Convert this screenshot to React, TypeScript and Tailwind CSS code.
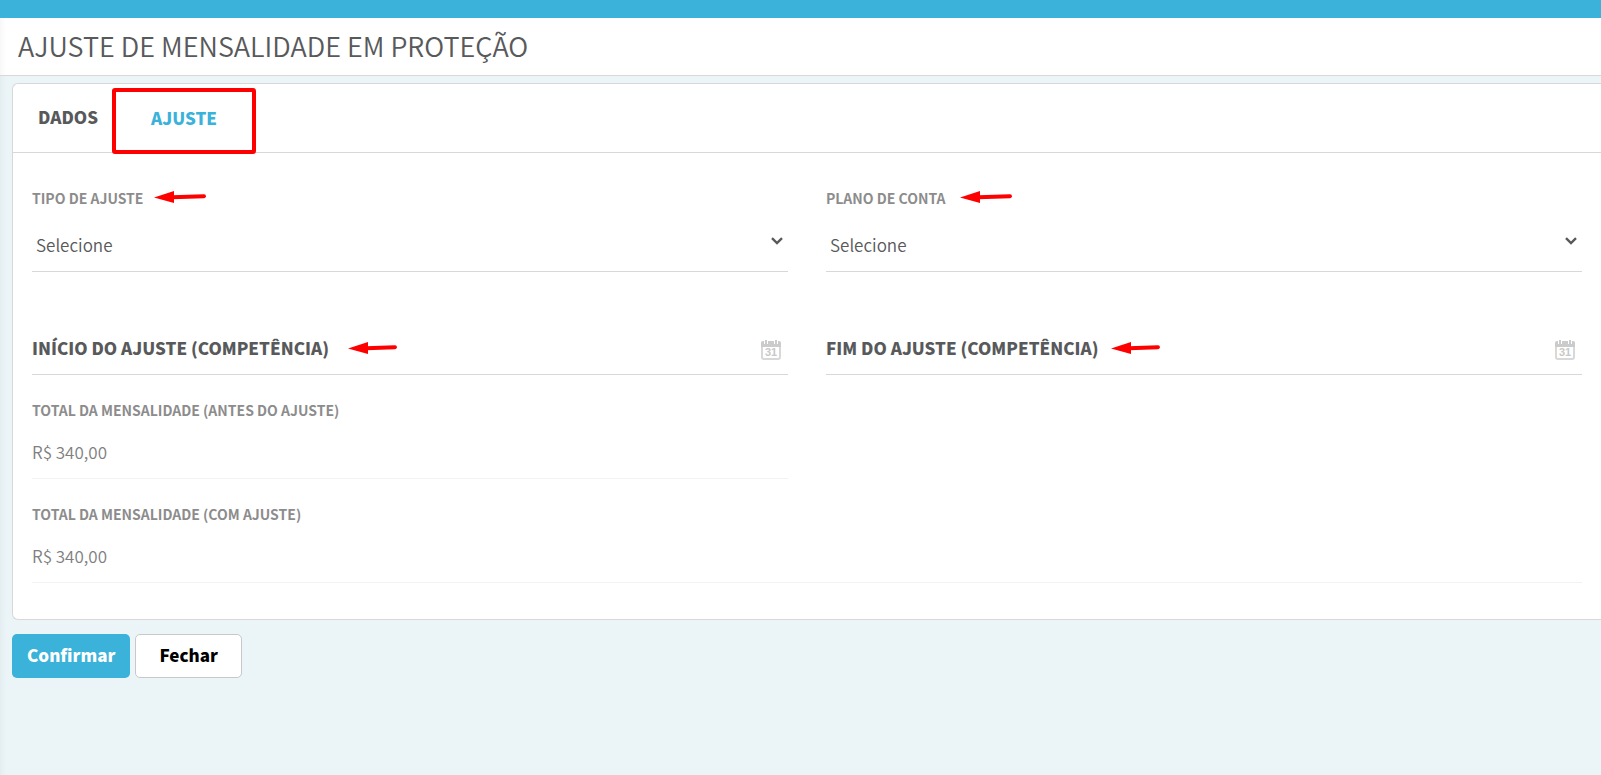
import type { ReactNode } from 'react'
import clsx from 'clsx'

const TABS = ['DADOS', 'AJUSTE']

function Arrow({ className, short }: { className?: string; short?: boolean }) {
  const width = short ? 49 : 52
  return (
    <svg
      width={width}
      height="12"
      viewBox={`0 0 ${width} 12`}
      aria-hidden="true"
      className={clsx('-mt-1 shrink-0', className)}
    >
      <path d="M0 6.5 20 0v12z" fill="#ff0000" />
      <path d={`M18 6.2 ${width - 2} 5.2`} stroke="#ff0000" strokeWidth="4" strokeLinecap="round" />
    </svg>
  )
}

function CalendarIcon() {
  return (
    <svg width="20" height="20" viewBox="0 0 20 20" aria-hidden="true">
      <rect x="1" y="3" width="18" height="16" rx="2" fill="#fff" stroke="#d8d8d8" strokeWidth="2" />
      <path d="M0 7V3a2 2 0 0 1 2-2h16a2 2 0 0 1 2 2v4z" fill="#cbcbcb" />
      <path d="M5 0v4M15 0v4" stroke="#fff" strokeWidth="4" />
      <path d="M5 0v4M15 0v4" stroke="#cbcbcb" strokeWidth="2" />
      <text
        x="10"
        y="16"
        textAnchor="middle"
        fontFamily="Liberation Sans, sans-serif"
        fontWeight="700"
        fontSize="11"
        fill="#c8c8c8"
      >
        31
      </text>
    </svg>
  )
}

function SelectField({ id, label, arrow }: { id: string; label: string; arrow: ReactNode }) {
  return (
    <div>
      <div className="flex h-[22px] items-center">
        <label htmlFor={id} className="pb-0.5 text-[14px] font-bold text-[#8c8c8c]">
          {label}
        </label>
        {arrow}
      </div>
      <div className="relative mt-[11px] border-b border-[#d8d8d8]">
        <select
          id={id}
          className="h-[50px] w-full appearance-none bg-transparent pb-0.5 pl-1 text-[17px] font-[350] text-[#58595b]"
        >
          <option>Selecione</option>
        </select>
        <svg
          width="12"
          height="8"
          viewBox="0 0 12 8"
          aria-hidden="true"
          className="pointer-events-none absolute top-4 right-[5px]"
        >
          <path d="M1 1.2l5 4.8 5-4.8" fill="none" stroke="#58595b" strokeWidth="2.4" />
        </svg>
      </div>
    </div>
  )
}

function DateField({ id, label, arrow }: { id: string; label: string; arrow: ReactNode }) {
  return (
    <div className="flex h-[50px] items-center border-b border-[#d8d8d8]">
      <label htmlFor={id} className="pb-[3px] text-[17px] font-black text-[#58595b]">
        {label}
      </label>
      {arrow}
      <input id={id} type="text" className="h-full min-w-0 flex-1 bg-transparent text-[17px] outline-none" />
      <button type="button" aria-label="Abrir calendário" className="mr-[7px]">
        <CalendarIcon />
      </button>
    </div>
  )
}

function TotalField({ id, label, value }: { id: string; label: string; value: string }) {
  return (
    <div className="mt-6">
      <label htmlFor={id} className="block text-[14px] leading-[22px] font-bold text-[#8c8c8c]">
        {label}
      </label>
      <input
        id={id}
        type="text"
        readOnly
        value={value}
        className="mt-[7px] block h-[51px] w-full border-b border-[#f2f2f2] bg-transparent pb-[3px] text-[17px] font-[350] text-[#808080] outline-none"
      />
    </div>
  )
}

export default function App() {
  return (
    <div className="min-h-screen bg-[#ebf4f7] font-['Source_Sans_Pro','Noto_Sans_CJK_JP',sans-serif] text-[#58595b]">
      <div className="h-[18px] bg-[#3ab2d9]" />
      <header className="flex h-[58px] items-center border-b border-[#d8d8d8] bg-white bg-linear-to-r from-black/3 to-transparent to-[6px] pb-0.5 pl-[18px]">
        <h1 className="text-[27px] leading-9 font-[350]">AJUSTE DE MENSALIDADE EM PROTEÇÃO</h1>
      </header>

      <main className="min-h-[calc(100vh-76px)] bg-linear-to-r from-black/3 to-transparent to-[6px] pt-[7px] pl-3">
        <section className="rounded-l-md border border-r-0 border-[#d8d8d8] bg-white">
          <nav className="flex h-[69px] items-stretch border-b border-[#d8d8d8] pl-[25px]">
            {TABS.map((tab) => (
              <button
                key={tab}
                type="button"
                className={clsx(
                  'text-[17px] font-black',
                  tab === 'AJUSTE'
                    ? '-mb-0.5 mt-1 ml-[14px] rounded-[3px] border-4 border-[#ff0000] px-[35px] pb-[7px] text-[#3ab2d9]'
                    : 'pb-0.5 text-[#58595b]',
                )}
              >
                {tab}
              </button>
            ))}
          </nav>

          <form className="px-[19px] pt-[35px] pb-9">
            <div className="grid grid-cols-2 gap-x-[38px]">
              <SelectField id="tipo" label="TIPO DE AJUSTE" arrow={<Arrow className="ml-[11px]" />} />
              <SelectField id="plano" label="PLANO DE CONTA" arrow={<Arrow className="ml-3.5" />} />
            </div>
            <div className="mt-[53px] grid grid-cols-2 gap-x-[38px]">
              <DateField id="inicio" label="INÍCIO DO AJUSTE (COMPETÊNCIA)" arrow={<Arrow short className="ml-[19px]" />} />
              <DateField id="fim" label="FIM DO AJUSTE (COMPETÊNCIA)" arrow={<Arrow short className="ml-3" />} />
            </div>
            <div className="grid grid-cols-2 gap-x-[38px]">
              <TotalField id="antes" label="TOTAL DA MENSALIDADE (ANTES DO AJUSTE)" value="R$ 340,00" />
            </div>
            <TotalField id="com" label="TOTAL DA MENSALIDADE (COM AJUSTE)" value="R$ 340,00" />
          </form>
        </section>

        <div className="mt-[14px] flex gap-[5px]">
          <button type="button" className="h-11 rounded-[5px] bg-[#3ab2d9] px-[15px] pb-[3px] text-[17px] font-black text-white">
            Confirmar
          </button>
          <button
            type="button"
            className="h-11 rounded-[5px] border border-[#c8c8c8] bg-white px-[23px] pb-[3px] text-[17px] font-black text-black"
          >
            Fechar
          </button>
        </div>
      </main>
    </div>
  )
}
